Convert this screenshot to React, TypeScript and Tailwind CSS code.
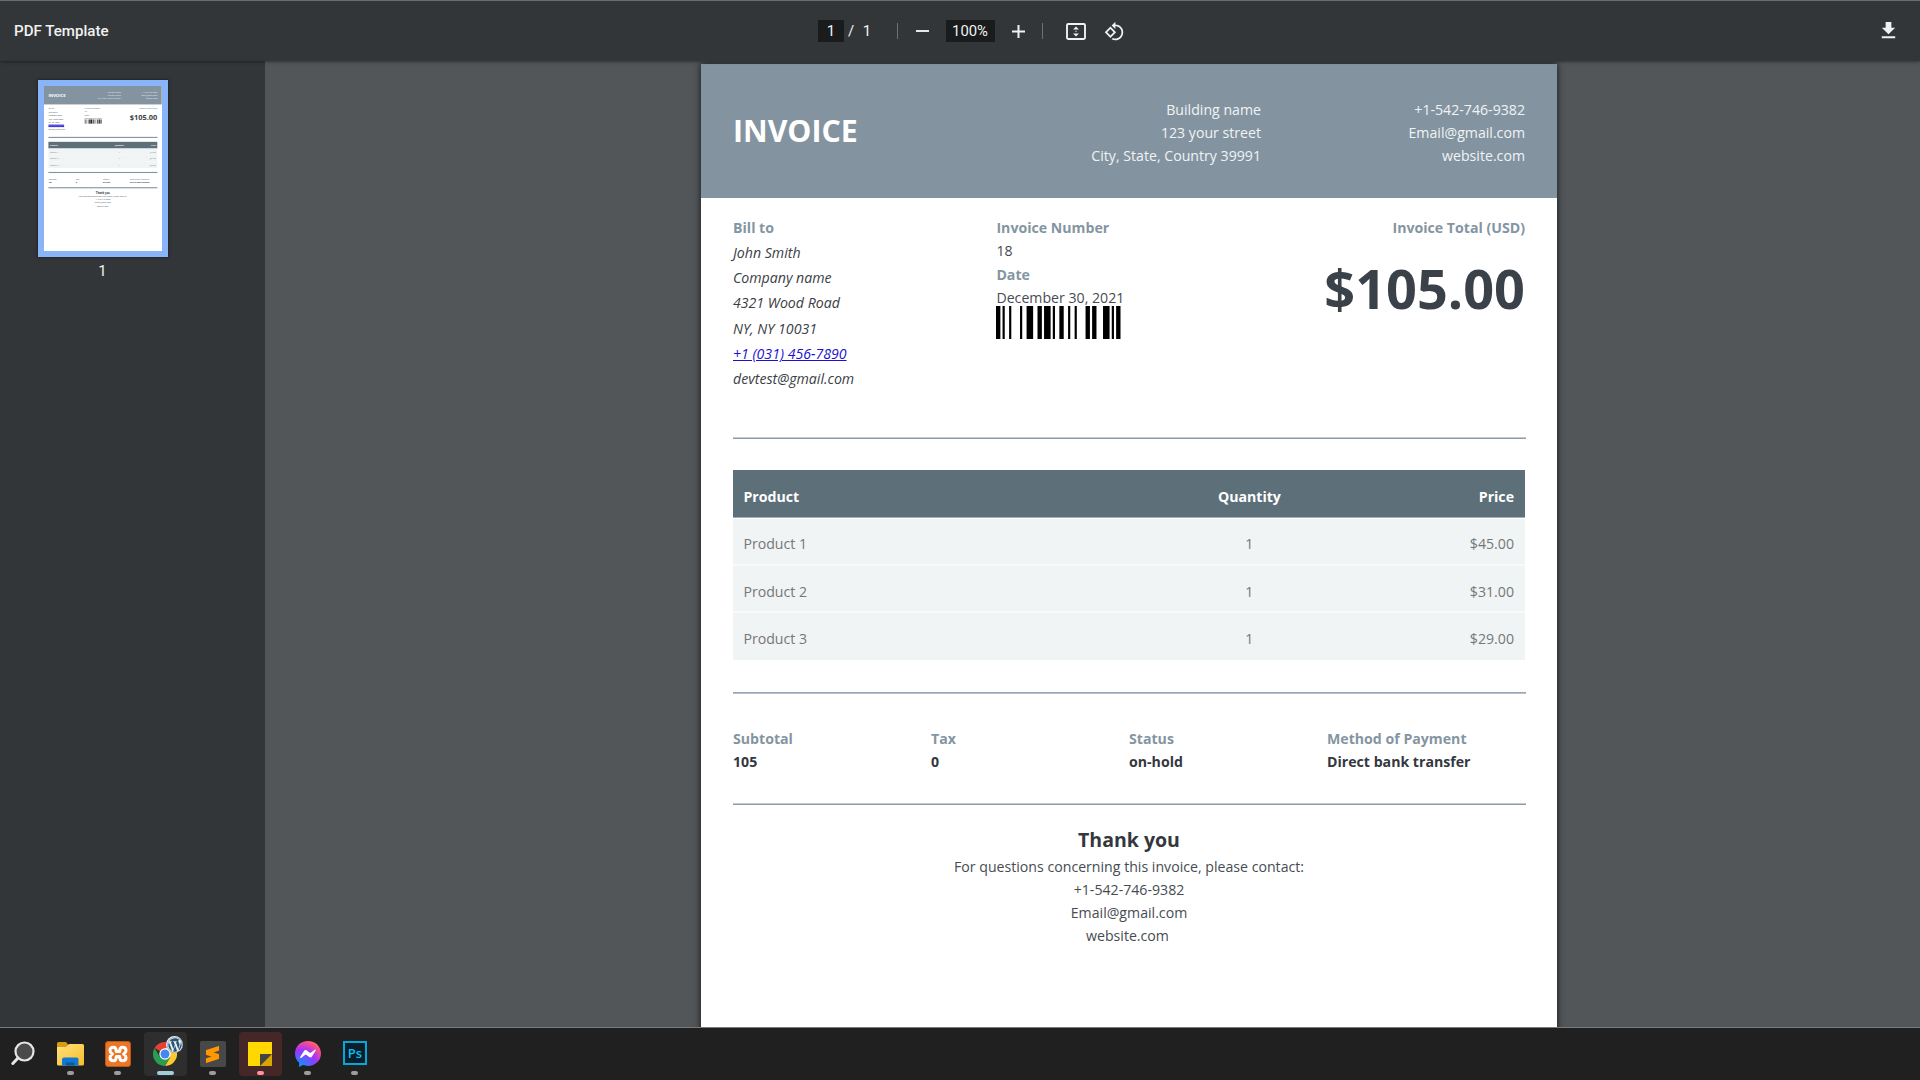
import React from "react";
import { SiSublimetext } from "react-icons/si";
import { FaWordpress } from "react-icons/fa";

const BARS = [2, 1, 1, 2, 1, 4, 1, 2, 3, 2, 2, 1, 3, 1, 1, 2, 2, 2, 1, 2, 1, 4, 2, 1, 2, 3, 3, 1, 1, 1, 2];

const PRODUCTS = [
  { name: "Product 1", qty: "1", price: "$45.00" },
  { name: "Product 2", qty: "1", price: "$31.00" },
  { name: "Product 3", qty: "1", price: "$29.00" },
];

const SUMMARY = [
  { label: "Subtotal", value: "105" },
  { label: "Tax", value: "0" },
  { label: "Status", value: "on-hold" },
  { label: "Method of Payment", value: "Direct bank transfer" },
];

function Barcode() {
  let x = 0;
  const rects: React.ReactNode[] = [];
  BARS.forEach((w, i) => {
    if (i % 2 === 0) rects.push(<rect key={i} x={x} y="0" width={w} height="10" />);
    x += w;
  });
  return (
    <svg className="-mt-[4px] block h-[33.5px] w-[124.5px]" viewBox="0 0 57 10" preserveAspectRatio="none" fill="#000">
      {rects}
    </svg>
  );
}

function Rule({ flip = false, thumb = false }: { flip?: boolean; thumb?: boolean }) {
  if (thumb) return <div className="mx-8 -my-[3px] h-[8px] w-[793px] shrink-0 bg-[#8293a0]" />;
  return (
    <div
      className={
        flip
          ? "mx-8 h-[2px] w-[793px] shrink-0 border-t border-b border-t-[#97a6b2] border-b-[#b5c0c8]"
          : "mx-8 h-[2px] w-[793px] shrink-0 border-t border-b border-t-[#c2cbd2] border-b-[#8c9ca9]"
      }
    />
  );
}

function InvoicePage({ thumb = false }: { thumb?: boolean }) {
  return (
    <div className="flex h-[1200px] w-[856px] flex-col bg-white font-['Open_Sans',sans-serif] text-[14.15px] leading-[23.4px] text-[#474c52]">
      <header className="grid h-[134px] shrink-0 grid-cols-3 bg-[#8394a0] px-8 leading-[23px] text-[#f0f3f5]">
        <h1 className="pt-[47px] text-[30.3px] font-bold leading-10 text-white">INVOICE</h1>
        <div className="pt-[34px] text-right">
          <div>Building name</div>
          <div>123 your street</div>
          <div>City, State, Country 39991</div>
        </div>
        <div className="pt-[34px] text-right">
          <div>+1-542-746-9382</div>
          <div>Email@gmail.com</div>
          <div>website.com</div>
        </div>
      </header>

      <section className="grid h-[239px] shrink-0 grid-cols-3 px-8 pt-[18px]">
        <div>
          <div className="h-6 font-bold text-[#8495a2]">Bill to</div>
          <div className="italic leading-[25.2px] text-[#3a4046]">
            <div>John Smith</div>
            <div>Company name</div>
            <div>4321 Wood Road</div>
            <div>NY, NY 10031</div>
            <div className="text-[#1d10d2] underline">
              <span className={thumb ? "bg-[#5a50e8]" : ""}>+1 (031) 456-7890</span>
            </div>
            <div>devtest@gmail.com</div>
          </div>
        </div>
        <div className="-ml-[0.6px]">
          <div className="font-bold text-[#8495a2]">Invoice Number</div>
          <div>18</div>
          <div className="font-bold text-[#8495a2]">Date</div>
          <div>December 30, 2021</div>
          <Barcode />
        </div>
        <div className="text-right">
          <div className="font-bold text-[#8495a2]">Invoice Total (USD)</div>
          <div className="mt-[17px] text-[54px] font-bold leading-[64px] text-[#3a4149]">$105.00</div>
        </div>
      </section>

      <Rule thumb={thumb} />

      <section className="mx-8 mt-[31px] w-[792px] shrink-0">
        <div className="mb-px flex h-12 border-b border-[#a3b0b8] bg-[#5d6f78] pl-[10.4px] pr-[11px] pt-[14.6px] font-bold text-white">
          <div className="w-[396px]">Product</div>
          <div className="w-[220px] text-center">Quantity</div>
          <div className="flex-1 text-right">Price</div>
        </div>
        {PRODUCTS.map((p, i) => (
          <div
            key={p.name}
            className={
              "flex h-[47px] bg-[#f0f4f5] pl-[10.4px] pr-[11px] text-[#777] " +
              ["border-b-2 border-[#f8fafa] pt-[13px]", "border-b-2 border-[#f8fafa] pt-[13.6px]", "pt-[14px]"][i]
            }
          >
            <div className="w-[396px]">{p.name}</div>
            <div className="w-[220px] text-center">{p.qty}</div>
            <div className="flex-1 text-right">{p.price}</div>
          </div>
        ))}
      </section>

      <div className="h-8 shrink-0" />
      <Rule flip thumb={thumb} />

      <section className="mx-8 grid h-[109px] w-[792px] shrink-0 grid-cols-4 pt-[34px] font-bold leading-[22.7px]">
        {SUMMARY.map((s) => (
          <div key={s.label}>
            <div className="text-[#8495a2]">{s.label}</div>
            <div className="text-[#33383e]">{s.value}</div>
          </div>
        ))}
      </section>

      <Rule thumb={thumb} />

      <footer className="pt-[20px] text-center text-[14.15px] leading-[23.1px]">
        <h2 className="h-[30px] text-[19.5px] font-bold leading-[30px] text-[#33383e]">Thank you</h2>
        <div>For questions concerning this invoice, please contact:</div>
        <div>+1-542-746-9382</div>
        <div>Email@gmail.com</div>
        <div className="pr-[3px]">website.com</div>
      </footer>
    </div>
  );
}

function Toolbar() {
  return (
    <div className="relative z-10 flex h-[61px] shrink-0 items-start border-t border-[#6a6e71] bg-[#323639] font-[Roboto,sans-serif] text-[15px] leading-[22px] text-[#f1f1f1] shadow-[0_1px_3px_rgba(0,0,0,0.4)]">
      <div className="w-[818px] pl-[14px] pt-[19px] text-[15.1px] font-medium">PDF Template</div>
      <div className="flex h-[60px] items-center">
        <div className="h-[22px] w-[26px] bg-[#191b1c] text-center">1</div>
        <div className="w-[45px] pl-[4px]">
          <span>/</span>
          <span className="pl-[8.5px]">1</span>
        </div>
        <div className="ml-[8px] h-4 w-px bg-[#6d7073]" />
        <div className="ml-[18px] h-[2px] w-[13px] bg-[#e8e8e8]" />
        <div className="ml-[17px] h-[22px] w-[49px] bg-[#191b1c] pr-px text-center text-[14.8px]">100%</div>
        <svg className="ml-[17px] size-[13px]" viewBox="0 0 13 13" fill="#f1f1f1">
          <path d="M5.500 0h2v5.500H13v2H7.500V13h-2V7.500H0v-2h5.500z" />
        </svg>
        <div className="ml-[17px] h-4 w-px bg-[#6d7073]" />
        <svg className="ml-[23px] h-[17px] w-5" viewBox="0 0 20 17" fill="#f1f1f1">
          <rect x="1" y="1" width="18" height="15" rx="1.200" fill="none" stroke="#f1f1f1" strokeWidth="1.900" />
          <path d="M10 3.400l2.900 3.200H7.100zM10 13.600l2.900-3.200H7.100z" />
          <rect x="9.200" y="7.700" width="1.600" height="1.400" opacity=".6" />
        </svg>
        <svg className="ml-[18px] size-[21px]" viewBox="0 0 24 24" fill="#f1f1f1">
          <path d="M7.340 6.410L.86 12.900l6.490 6.480 6.490-6.480-6.500-6.490zM3.690 12.900l3.660-3.660L11 12.900l-3.660 3.660-3.650-3.660zm15.670-6.260C17.610 4.880 15.300 4 13 4V.76L8.760 5 13 9.240V6c1.790 0 3.580.68 4.950 2.050 2.730 2.730 2.730 7.170 0 9.900C16.580 19.320 14.790 20 13 20c-.97 0-1.940-.21-2.840-.61l-1.490 1.490C10.020 21.620 11.510 22 13 22c2.300 0 4.610-.88 6.360-2.640 3.520-3.510 3.520-9.210 0-12.720z" />
        </svg>
      </div>
      <svg className="ml-auto mr-[20px] mt-[18px] size-[23px]" viewBox="0 0 24 24" fill="#f1f1f1">
        <path d="M19 9h-4V3H9v6H5l7 7 7-7zM5 18v2h14v-2H5z" />
      </svg>
    </div>
  );
}

function Task({ children, box = "", dot = "w-[7px] bg-[#9d9d9d]" }: { children: React.ReactNode; box?: string; dot?: string }) {
  return (
    <div className="flex w-[47.400px] justify-center">
      <div className={"mt-[4px] flex h-11 w-[43px] flex-col items-center rounded-[4px] pt-[8px] " + box}>
        <div className="flex h-7 items-center justify-center">{children}</div>
        <div className={"mt-[3px] h-[4px] rounded-full " + dot} />
      </div>
    </div>
  );
}

function Taskbar() {
  return (
    <div className="relative z-20 flex h-[53px] shrink-0 border-t border-[#77797b] bg-[#202020]">
      <div className="w-[46.900px] pl-[10px] pt-[12px]">
        <svg className="size-[27px]" viewBox="0 0 27 27">
          <circle cx="14.500" cy="11.500" r="9" fill="#4b4b4b" stroke="#e6e6e6" strokeWidth="2.200" />
          <path d="M8 18L2.800 23.500" stroke="#e6e6e6" strokeWidth="3" strokeLinecap="round" />
        </svg>
      </div>
      <Task>
        <svg className="h-[24px] w-[27px]" viewBox="0 0 27 24">
          <defs>
            <linearGradient id="folder" x1="0" y1="0" x2="1" y2="1">
              <stop offset="0" stopColor="#ffe27e" />
              <stop offset="1" stopColor="#f8bd2c" />
            </linearGradient>
          </defs>
          <path d="M0 1.500Q0 0 1.500 0H9L11 2.500V6H0z" fill="#d99c10" />
          <path d="M0 5H9L12 2H25.500Q27 2 27 3.500V22Q27 23.500 25.500 23.500H1.500Q0 23.500 0 22z" fill="url(#folder)" />
          <path d="M5 23.500V17.500Q5 15.500 7 15.500H19.500Q21.500 15.500 21.500 17.500V23.500z" fill="#1279d0" />
          <path d="M9 20.500H17.500V23.500H9z" fill="#0b58a3" />
        </svg>
      </Task>
      <Task>
        <div className="flex size-[26px] items-center justify-center rounded-[3px] border border-[#b9571a] bg-[#ec7526]">
          <svg className="size-[20px]" viewBox="0 0 20 20" fill="none" stroke="#fff" strokeWidth="3" strokeLinejoin="round" strokeLinecap="round">
            <path d="M8.300 7.600C8.300 4.200 7.400 3.200 5.400 3.200 3.200 3.200 2 4.600 2 6.500 2 8.400 3.400 9.200 4.400 10 3.400 10.800 2 11.600 2 13.500 2 15.400 3.200 16.800 5.400 16.800 7.400 16.800 8.300 15.800 8.300 12.400H11.700C11.700 15.800 12.600 16.800 14.600 16.800 16.800 16.800 18 15.400 18 13.500 18 11.600 16.600 10.800 15.600 10 16.600 9.200 18 8.400 18 6.500 18 4.600 16.800 3.200 14.600 3.200 12.600 3.200 11.700 4.200 11.700 7.600z" />
          </svg>
        </div>
      </Task>
      <Task box="bg-[#2e2e2e]" dot="w-[17px] bg-[#a3cddc]">
        <div className="relative size-6">
          <svg className="size-6" viewBox="0 0 24 24">
            <path d="M12 12L1.600 6A12 12 0 0 1 22.400 6H12z" fill="#e34133" />
            <path d="M12 24A12 12 0 0 0 22.400 6H12V12L17.200 15z" fill="#fdc92e" />
            <path d="M1.600 6L6.800 15L12 12L17.200 15L12 24A12 12 0 0 1 1.600 6z" fill="#2a9d4e" />
            <circle cx="12" cy="12" r="5.700" fill="#fff" />
            <circle cx="12" cy="12" r="4.500" fill="#4387f1" />
          </svg>
          <div className="absolute -right-[6px] -top-[6px] flex size-[17px] items-center justify-center rounded-full bg-[#e8eef2]">
            <FaWordpress className="size-[16px] text-[#285372]" />
          </div>
        </div>
      </Task>
      <Task>
        <div className="flex size-[26px] items-center justify-center rounded-[2px] bg-[#484848]">
          <SiSublimetext className="size-[17px] text-[#ff9800]" />
        </div>
      </Task>
      <Task box="bg-[#462728]" dot="w-[7px] bg-[#ff929c]">
        <svg className="size-6" viewBox="0 0 24 24">
          <path d="M0 0H24V12H12V24H0z" fill="#ffd800" />
          <path d="M12 12H24L12 24z" fill="#454545" />
          <path d="M24 12V24H12z" fill="#d9a800" />
        </svg>
      </Task>
      <Task>
        <svg className="size-[26px]" viewBox="0 0 26 26">
          <defs>
            <radialGradient id="msg" cx="0.190" cy="1" r="1.090">
              <stop offset="0" stopColor="#0099ff" />
              <stop offset="0.600" stopColor="#a033ff" />
              <stop offset="0.930" stopColor="#ff5280" />
              <stop offset="1" stopColor="#ff7061" />
            </radialGradient>
          </defs>
          <path d="M13 0C5.700 0 0 5.300 0 12.500c0 3.800 1.600 7 4.100 9.300V26l3.900-1.900c1.500.5 3.200.8 5 .8 7.300 0 13-5.300 13-12.400S20.300 0 13 0z" fill="url(#msg)" />
          <path d="M5.200 16.100L9 10c.6-1 1.900-1.200 2.800-.5l3 2.300c.3.200.6.200.9 0l4.100-3.100c.6-.4 1.300.2.900.9L17 15.600c-.6 1-1.900 1.200-2.800.5l-3-2.300c-.3-.2-.6-.2-.9 0L6.100 17c-.5.400-1.200-.3-.9-.9z" fill="#fff" />
        </svg>
      </Task>
      <Task>
        <div className="mb-[2px] flex size-6 items-center justify-center border-2 border-[#06a8d8] bg-[#0a1f2b] font-['Open_Sans',sans-serif] text-[13px] font-semibold leading-5 text-[#10bdf0]">
          Ps
        </div>
      </Task>
    </div>
  );
}

export default function App() {
  return (
    <div className="flex h-[1080px] w-[1920px] flex-col overflow-hidden bg-[#525659]">
      <Toolbar />
      <div className="flex h-[966px] shrink-0">
        <aside className="flex w-[265px] shrink-0 flex-col bg-[#323639] pl-[38px] pt-[19px]">
          <div className="h-[177px] w-[129.5px] border-6 border-[#8ab4f8] bg-white shadow-[0_0_3px_rgba(0,0,0,0.6)]">
            <div className="h-[165px] w-[117.5px] overflow-hidden">
              <div className="origin-top-left scale-[0.1375]">
                <InvoicePage thumb />
              </div>
            </div>
          </div>
          <div className="w-[129px] pt-[3px] text-center font-[Roboto,sans-serif] text-[15px] leading-[22px] text-[#f1f1f1]">1</div>
        </aside>
        <main className="h-[966px] flex-1 overflow-hidden pl-[436px] pt-[3px]">
          <div className="w-[856px] shadow-[0_0_7px_rgba(0,0,0,0.75)]">
            <InvoicePage />
          </div>
        </main>
      </div>
      <Taskbar />
    </div>
  );
}
